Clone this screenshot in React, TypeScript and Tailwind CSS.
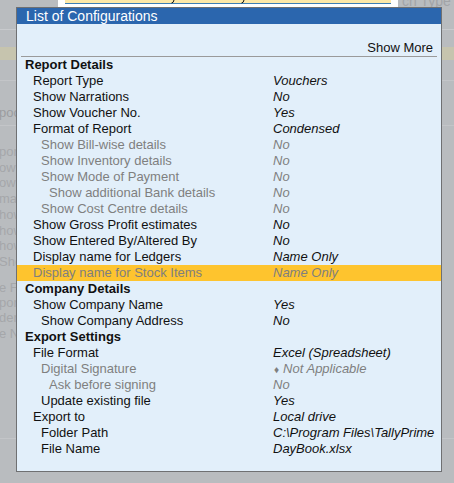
import React from "react";

type Row = {
  t: string;
  h?: boolean;
  l?: number;
  v?: string;
  d?: boolean;
  sel?: boolean;
  diamond?: boolean;
};

const rows: Row[] = [
  { t: "Report Details", h: true },
  { t: "Report Type", l: 1, v: "Vouchers" },
  { t: "Show Narrations", l: 1, v: "No" },
  { t: "Show Voucher No.", l: 1, v: "Yes" },
  { t: "Format of Report", l: 1, v: "Condensed" },
  { t: "Show Bill-wise details", l: 2, v: "No", d: true },
  { t: "Show Inventory details", l: 2, v: "No", d: true },
  { t: "Show Mode of Payment", l: 2, v: "No", d: true },
  { t: "Show additional Bank details", l: 3, v: "No", d: true },
  { t: "Show Cost Centre details", l: 2, v: "No", d: true },
  { t: "Show Gross Profit estimates", l: 1, v: "No" },
  { t: "Show Entered By/Altered By", l: 1, v: "No" },
  { t: "Display name for Ledgers", l: 1, v: "Name Only" },
  { t: "Display name for Stock Items", l: 1, v: "Name Only", d: true, sel: true },
  { t: "Company Details", h: true },
  { t: "Show Company Name", l: 1, v: "Yes" },
  { t: "Show Company Address", l: 2, v: "No" },
  { t: "Export Settings", h: true },
  { t: "File Format", l: 1, v: "Excel (Spreadsheet)" },
  { t: "Digital Signature", l: 2, v: "Not Applicable", d: true, diamond: true },
  { t: "Ask before signing", l: 3, v: "No", d: true },
  { t: "Update existing file", l: 2, v: "Yes" },
  { t: "Export to", l: 1, v: "Local drive" },
  { t: "Folder Path", l: 2, v: "C:\\Program Files\\TallyPrime" },
  { t: "File Name", l: 2, v: "DayBook.xlsx" },
];

const indent = ["pl-[8px]", "pl-[16px]", "pl-[24px]", "pl-[32px]"];

const bgFrags = ["por", "ow", "ow", "ma", "how", "how", "how", "Sho"];
const bgFrags2 = ["e Fo", "por", "der", "e N"];

export default function App() {
  return (
    <div className="relative w-[454px] h-[483px] overflow-hidden bg-[#b9bcbf] font-['Liberation_Sans',Arial,sans-serif] text-[13px]">
      {/* backdrop page */}
      <div className="flex flex-col w-full">
        <div className="flex h-[29px] items-start">
          <div className="w-[58px]" />
          <div className="w-[340px] h-[7px] bg-white px-[7px]">
            <div className="relative h-[4px] bg-[#fde8a8] border-b border-[#3d7fb5]">
              <svg className="absolute left-[106px] top-0" width="4" height="4" viewBox="0 0 4 4">
                <path d="M3 0 Q2.5 3 0.5 3" stroke="#111" strokeWidth="1" fill="none" />
              </svg>
              <svg className="absolute left-[176px] top-0" width="4" height="4" viewBox="0 0 4 4">
                <path d="M3 0 Q2.5 3 0.5 3" stroke="#111" strokeWidth="1" fill="none" />
              </svg>
            </div>
          </div>
          <div className="ml-[4px] mt-[-6px] leading-[14px] text-[14px] text-[#a2a4a7] whitespace-nowrap">ch Type</div>
        </div>
        <div className="h-[1px] bg-[#c8cacd]" />
        <div className="h-[17px]" />
        <div className="h-[13px] bg-[#c6c4ae]" />
        <div className="h-[20px]" />
        <div className="h-[1px] bg-[#c3c5c8]" />
        <div className="h-[24px]" />
        <div className="h-[16px] leading-[16px] text-[#9b9da0] ml-[-1px]">poor</div>
        <div className="h-[4px]" />
        <div className="h-[1px] bg-[#c3c5c8]" />
        <div className="h-[18px]" />
        <div className="flex flex-col text-[#a5a7aa] leading-[15.7px]">
          {bgFrags.map((f, i) => (
            <div key={i} className="whitespace-nowrap ml-[-1px]">{f}</div>
          ))}
        </div>
        <div className="h-[10px]" />
        <div className="flex flex-col text-[#a5a7aa] leading-[15.3px]">
          {bgFrags2.map((f, i) => (
            <div key={i} className="whitespace-nowrap ml-[-1px]">{f}</div>
          ))}
        </div>
        <div className="h-[97px]" />
        <div className="h-[1px] bg-[#c3c5c8]" />
      </div>

      {/* dialog */}
      <div className="absolute left-[16px] top-[7px] w-[426px] h-[465px] border border-[#6f7072] bg-[#e2effa] flex flex-col">
        <div className="h-[16px] bg-[#2b66ae] text-white text-[14px] leading-[16px] pl-[9px]">List of Configurations</div>
        <div className="h-[16px]" />
        <div className="h-[16px] leading-[16px] text-right pr-[8px] text-[#111]">Show More</div>
        <div className="mx-[4px] h-[1px] bg-[#9a9a9a]" />
        <div className="flex flex-col">
          {rows.map((r, i) => (
            <div
              key={i}
              className={`flex h-[16px] leading-[16px] whitespace-nowrap ${r.sel ? "bg-[#fec42e]" : ""}`}
            >
              <div
                className={`w-[256px] ${indent[r.h ? 0 : r.l ?? 0]} ${
                  r.h ? "font-bold text-[#111]" : r.d ? "text-[#7f7f7f]" : "text-[#111]"
                }`}
              >
                {r.t}
              </div>
              {r.v && (
                <div className={`italic ${r.d ? "text-[#7f7f7f]" : "text-[#111]"}`}>
                  {r.diamond && <span className="not-italic text-[10px] mr-[4px] ml-[1px]">♦</span>}
                  {r.v}
                </div>
              )}
            </div>
          ))}
        </div>
      </div>
    </div>
  );
}
